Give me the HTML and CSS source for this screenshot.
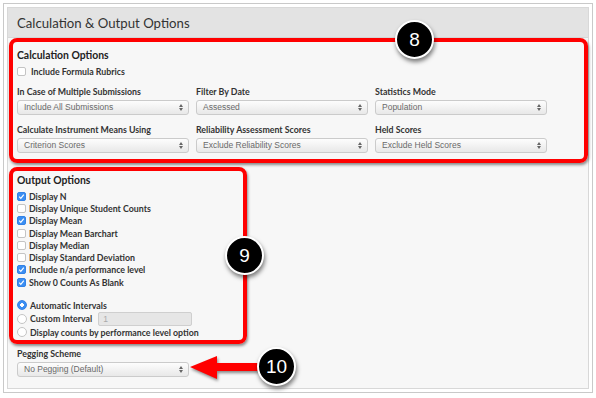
FILE: index.html
```html
<!DOCTYPE html>
<html lang="en">
  <head>
    <meta charset="UTF-8" />
    <title>Calculation &amp; Output Options</title>
    <link rel="stylesheet" href="styles.css">
  </head>
  <body>
    <div class="shot">
      <div class="frame">
        <div class="panel">
          <div class="panel-head">Calculation &amp; Output Options</div>
          <div class="panel-body">
            <h3 class="sec-title">Calculation Options</h3>
            <div class="opt rubric"><span class="cb"></span>Include Formula Rubrics</div>

            <div class="fields">
              <div class="field">
                <label>In Case of Multiple Submissions</label>
                <div class="select">Include All Submissions<span class="arr"></span></div>
              </div>
              <div class="field">
                <label>Filter By Date</label>
                <div class="select">Assessed<span class="arr"></span></div>
              </div>
              <div class="field">
                <label>Statistics Mode</label>
                <div class="select">Population<span class="arr"></span></div>
              </div>
              <div class="field">
                <label>Calculate Instrument Means Using</label>
                <div class="select">Criterion Scores<span class="arr"></span></div>
              </div>
              <div class="field">
                <label>Reliability Assessment Scores</label>
                <div class="select">Exclude Reliability Scores<span class="arr"></span></div>
              </div>
              <div class="field">
                <label>Held Scores</label>
                <div class="select">Exclude Held Scores<span class="arr"></span></div>
              </div>
            </div>

            <h3 class="sec-title output-title">Output Options</h3>
            <div class="checks">
              <div class="opt"><span class="cb on"></span>Display N</div>
              <div class="opt"><span class="cb"></span>Display Unique Student Counts</div>
              <div class="opt"><span class="cb on"></span>Display Mean</div>
              <div class="opt"><span class="cb"></span>Display Mean Barchart</div>
              <div class="opt"><span class="cb"></span>Display Median</div>
              <div class="opt"><span class="cb"></span>Display Standard Deviation</div>
              <div class="opt"><span class="cb on"></span>Include n/a performance level</div>
              <div class="opt"><span class="cb on"></span>Show 0 Counts As Blank</div>
            </div>
            <div class="radios">
              <div class="opt"><span class="rd on"></span>Automatic Intervals</div>
              <div class="opt"><span class="rd"></span>Custom Interval<span class="num">1</span></div>
              <div class="opt"><span class="rd"></span>Display counts by performance level option</div>
            </div>

            <div class="field pegging">
              <label>Pegging Scheme</label>
              <div class="select">No Pegging (Default)<span class="arr"></span></div>
            </div>
          </div>
        </div>
      </div>

      <!-- annotations -->
      <div class="callout box-calc"></div>
      <div class="callout box-output"></div>
      <svg class="arrow" width="80" height="32" viewBox="0 0 80 32">
        <polygon points="4,15 31,4 31,11 76,11 76,19 31,19 31,27" fill="#f00" />
      </svg>
      <div class="badge b8">8</div>
      <div class="badge b9">9</div>
      <div class="badge b10">10</div>
    </div>
  </body>
</html>
```

FILE: styles.css
```css
body {
  margin: 0;
  background: #fff;
  font-family: Lato, "Open Sans", sans-serif;
  color: #333;
}
.shot {
  position: relative;
  width: 596px;
  height: 398px;
  padding: 3px 3px 5px 3px;
  box-sizing: border-box;
}
.frame {
  height: 100%;
  box-sizing: border-box;
  border: 1px solid #c9c9c9;
  padding: 3px;
}
.panel {
  height: 100%;
  box-sizing: border-box;
  border: 1px solid #d8d8d8;
  background: #f7f7f7;
}
.panel-head {
  height: 29px;
  line-height: 30px;
  padding-left: 9px;
  background: #e3e3e3;
  border-bottom: 1px solid #d8d8d8;
  font-size: 13.2px;
  color: #333;
}
.panel-body {
  padding: 10px 9px 0 9px;
}
.sec-title {
  margin: 0;
  font-size: 10.4px;
  line-height: 14px;
  font-weight: bold;
  color: #222;
}
.opt {
  display: flex;
  align-items: center;
  height: 12.3px;
  font-size: 8.8px;
  font-weight: bold;
  color: #333;
  white-space: nowrap;
}
.rubric {
  margin-top: 3px;
  height: 12px;
}
.cb {
  width: 9px;
  height: 9px;
  box-sizing: border-box;
  margin-right: 3px;
  border: 1px solid #c4c4c4;
  border-radius: 2px;
  background: #fff;
  flex: none;
}
.rubric .cb {
  margin-right: 5px;
}
.cb.on {
  border-color: #3382e6;
  background: #3b8ef2 url("data:image/svg+xml;utf8,<svg xmlns='http://www.w3.org/2000/svg' viewBox='0 0 9 9'><polyline points='2.2,4.6 3.8,6.3 6.8,2.6' fill='none' stroke='white' stroke-width='1.2'/></svg>") center / 9px 9px no-repeat;
}
.fields {
  display: grid;
  grid-template-columns: repeat(3, 172px);
  column-gap: 7px;
  row-gap: 9px;
  margin-top: 9px;
}
.field label {
  display: block;
  font-size: 8.8px;
  line-height: 12px;
  font-weight: bold;
  color: #333;
}
.select {
  position: relative;
  width: 172px;
  height: 15px;
  box-sizing: border-box;
  margin-top: 2px;
  padding-left: 6px;
  border: 1px solid #cbcbcb;
  border-radius: 3px;
  background: linear-gradient(#fdfdfd, #e8e8e8);
  font-family: "Liberation Sans", Arial, sans-serif;
  font-size: 8.5px;
  line-height: 13px;
  color: #6a6a6a;
}
.arr {
  position: absolute;
  right: 5px;
  top: 3px;
  width: 0;
  height: 0;
  border-left: 2px solid transparent;
  border-right: 2px solid transparent;
  border-bottom: 3px solid #666;
}
.arr::after {
  content: "";
  position: absolute;
  left: -2px;
  top: 4px;
  border-left: 2px solid transparent;
  border-right: 2px solid transparent;
  border-top: 3px solid #666;
}
.output-title {
  margin-top: 20px;
}
.checks {
  margin-top: 3px;
}
.radios {
  margin-top: 10px;
}
.radios .opt {
  height: 13.5px;
}
.rd {
  width: 10px;
  height: 10px;
  box-sizing: border-box;
  margin-right: 3px;
  border: 1px solid #c4c4c4;
  border-radius: 50%;
  background: #fff;
  flex: none;
}
.rd.on {
  border-color: #3382e6;
  background: radial-gradient(circle, #fff 0 1.6px, #3b8ef2 2px);
}
.num {
  width: 94px;
  height: 14px;
  box-sizing: border-box;
  margin-left: 6px;
  padding-left: 4px;
  border: 1px solid #cfcfcf;
  border-radius: 2px;
  background: #e6e6e6;
  font-family: "Liberation Sans", Arial, sans-serif;
  font-weight: normal;
  font-size: 8.5px;
  line-height: 12px;
  color: #aaa;
}
.pegging {
  margin-top: 9px;
}
.callout {
  position: absolute;
  border: 4px solid #f00;
  border-radius: 8px;
  box-shadow: 1px 2px 3px rgba(0, 0, 0, 0.45);
}
.box-calc {
  left: 9px;
  top: 38px;
  width: 571px;
  height: 117px;
}
.box-output {
  left: 9px;
  top: 167px;
  width: 230px;
  height: 169px;
}
.arrow {
  position: absolute;
  left: 186px;
  top: 352px;
  filter: drop-shadow(1px 2px 1.5px rgba(0, 0, 0, 0.45));
}
.badge {
  position: absolute;
  width: 35px;
  height: 35px;
  border: 2px solid #fff;
  border-radius: 50%;
  background: #000;
  box-shadow: 1px 3px 4px rgba(0, 0, 0, 0.5);
  color: #fff;
  font-family: "Liberation Sans", Arial, sans-serif;
  font-size: 19px;
  line-height: 35px;
  text-align: center;
}
.b8 {
  left: 395px;
  top: 20px;
}
.b9 {
  left: 225px;
  top: 236px;
}
.b10 {
  left: 257px;
  top: 347px;
}
```
